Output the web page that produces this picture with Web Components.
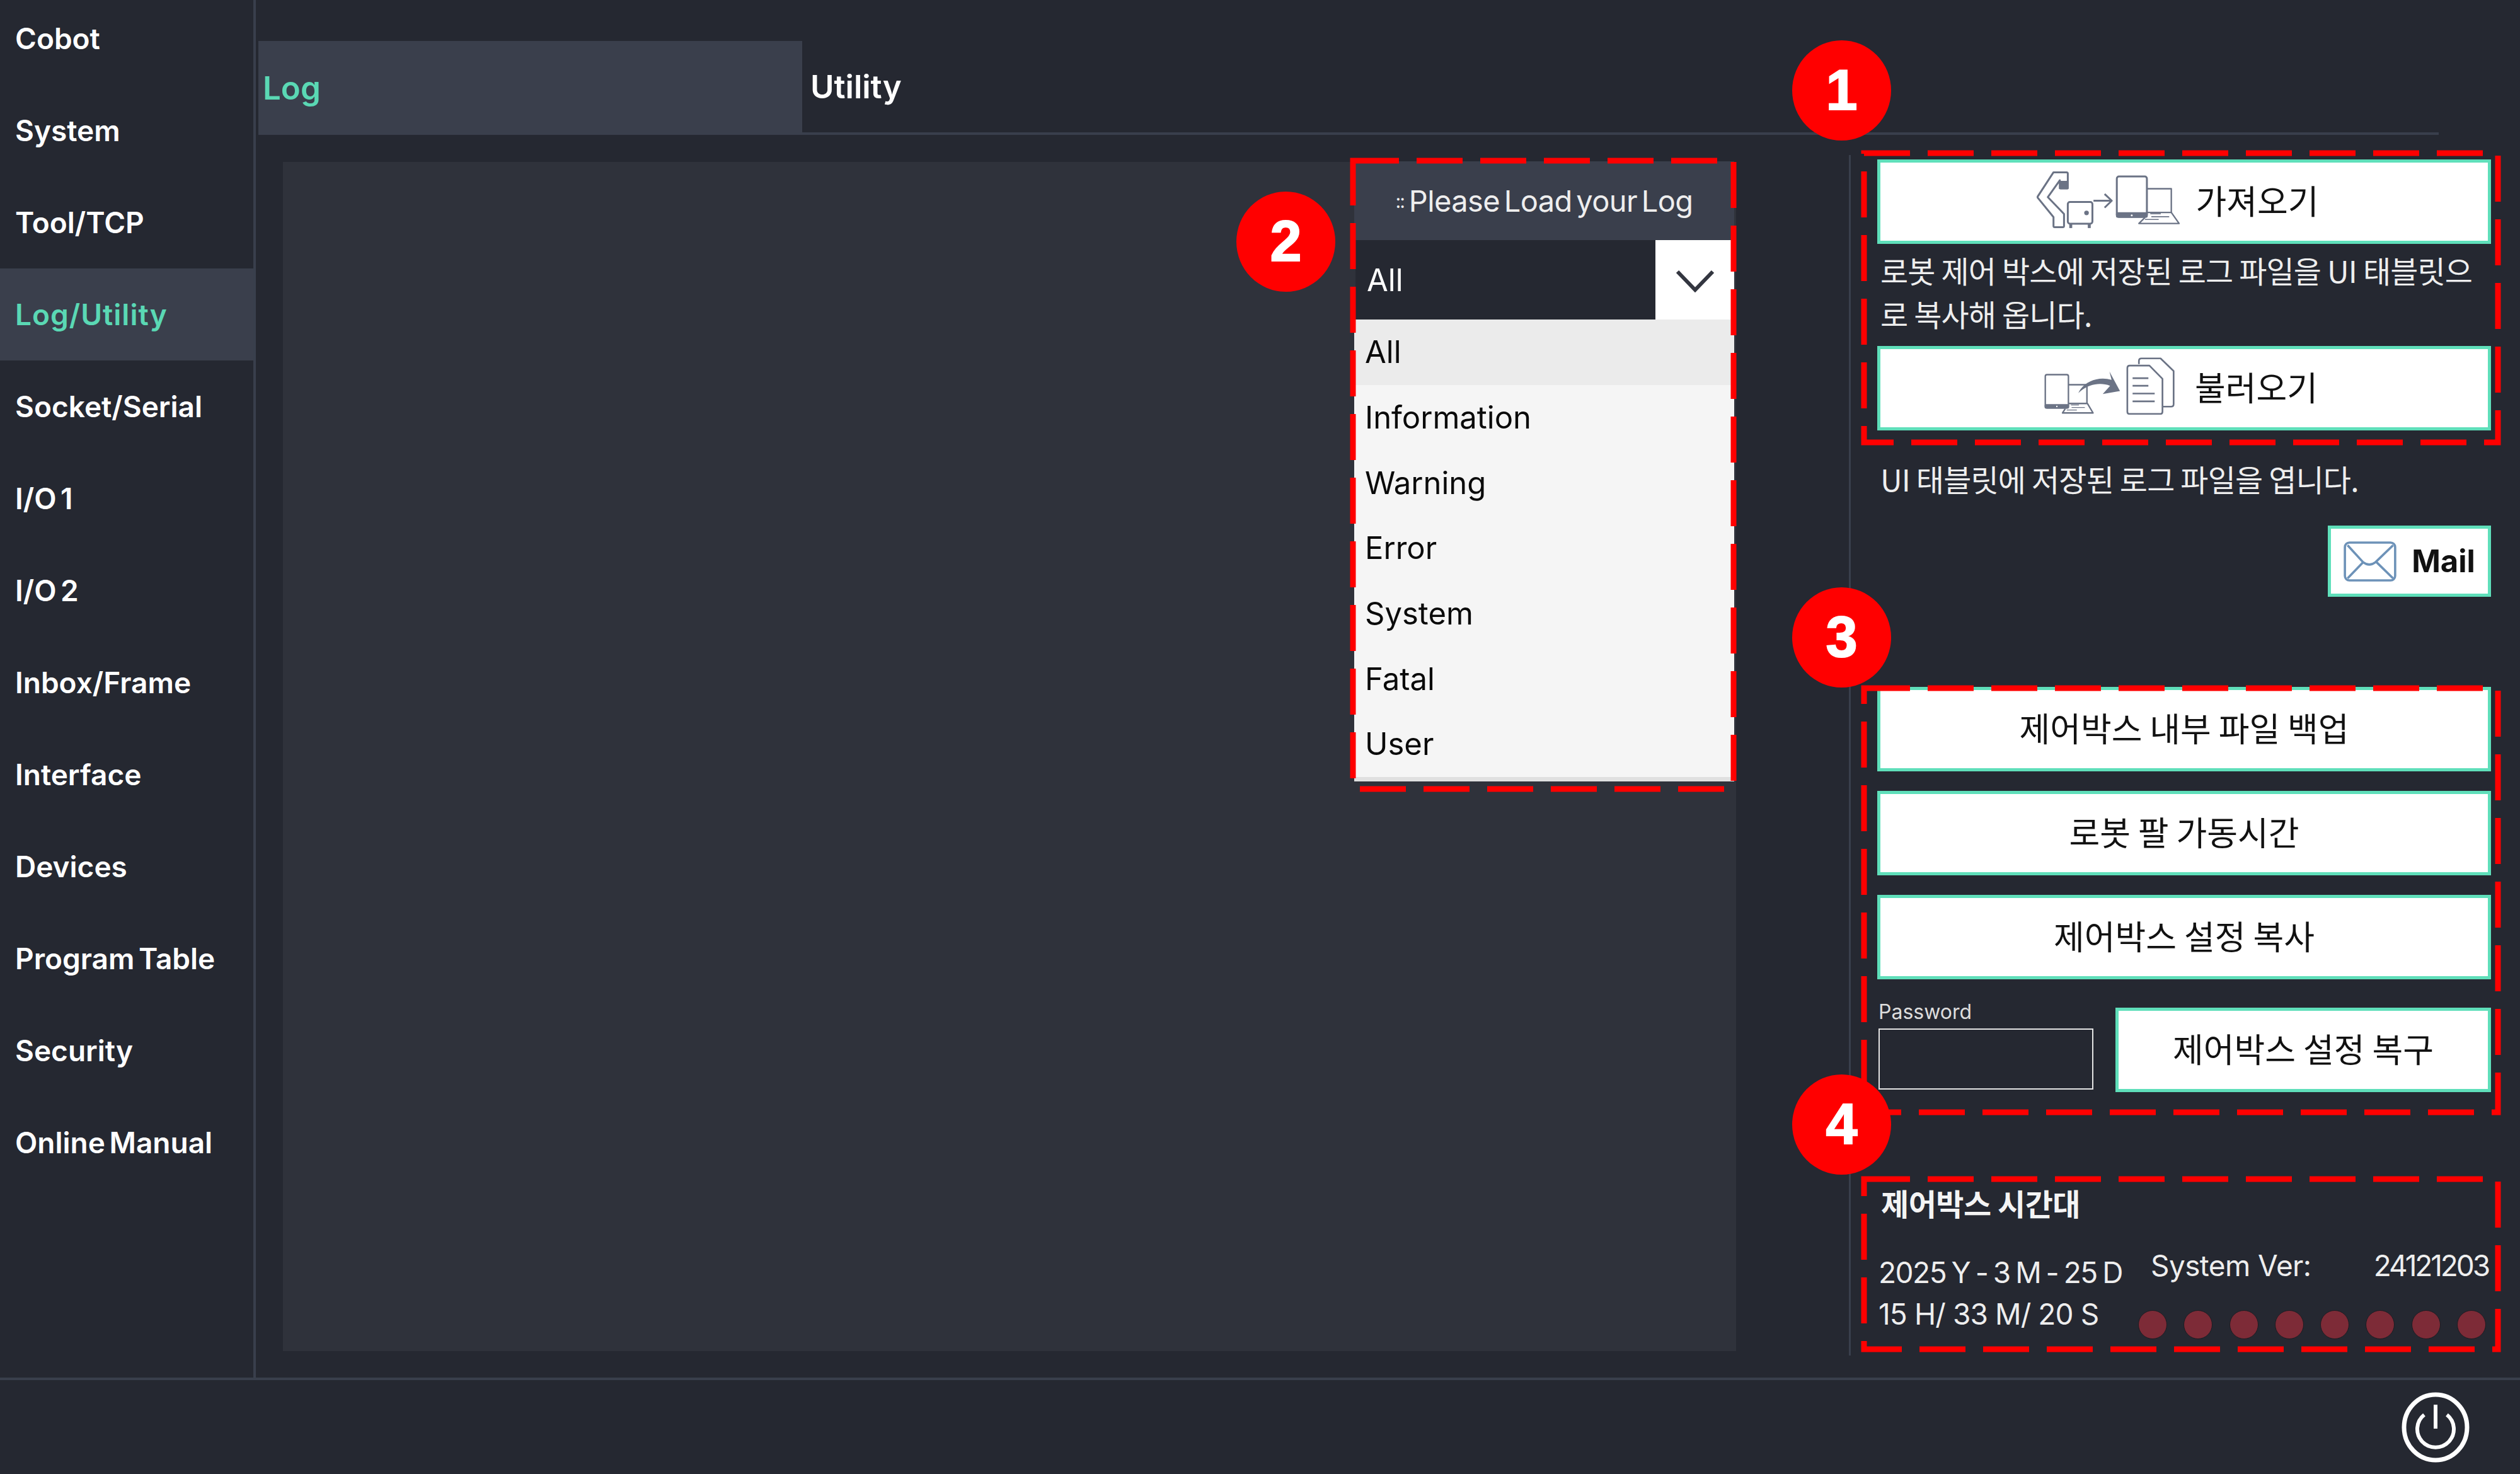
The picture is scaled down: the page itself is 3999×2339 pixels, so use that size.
<!DOCTYPE html>
<html>
<head>
<meta charset="utf-8">
<style>
    html, body { margin: 0; padding: 0; background: #252831; }
</style>
</head>
<body>
<robot-app>
    <side-nav slot="side">
        <nav-item>Cobot</nav-item>
        <nav-item>System</nav-item>
        <nav-item>Tool/TCP</nav-item>
        <nav-item active>Log/Utility</nav-item>
        <nav-item>Socket/Serial</nav-item>
        <nav-item>I/O 1</nav-item>
        <nav-item>I/O 2</nav-item>
        <nav-item>Inbox/Frame</nav-item>
        <nav-item>Interface</nav-item>
        <nav-item>Devices</nav-item>
        <nav-item>Program Table</nav-item>
        <nav-item>Security</nav-item>
        <nav-item>Online Manual</nav-item>
    </side-nav>
    <tab-bar slot="tabs"></tab-bar>
    <log-view slot="log"><log-select></log-select></log-view>
    <util-panel slot="util"></util-panel>
    <power-button slot="foot"></power-button>

    <mark-box slot="marks" x="2957.5" y="242.5" w="1006" h="459"></mark-box>
    <mark-box slot="marks" x="2146.5" y="254.5" w="604" h="997"></mark-box>
    <mark-box slot="marks" x="2957.5" y="1091.5" w="1006" h="673"></mark-box>
    <mark-box slot="marks" x="2957.5" y="1870.5" w="1006" h="270"></mark-box>
    <mark-badge slot="marks" x="2844" y="64">1</mark-badge>
    <mark-badge slot="marks" x="1962" y="304">2</mark-badge>
    <mark-badge slot="marks" x="2844" y="932">3</mark-badge>
    <mark-badge slot="marks" x="2844" y="1705">4</mark-badge>
</robot-app>

<script>
const UI_FONT = `Inter, "Noto Sans", sans-serif`;
const KR_FONT = `"Noto Sans CJK KR", "Noto Sans", sans-serif`;

class RobotApp extends HTMLElement {
    constructor() {
        super();
        this.attachShadow({ mode: "open" });
        this.shadowRoot.innerHTML = `
            <style>
                :host {
                    display: block;
                    position: relative;
                    width: 3999px;
                    height: 2339px;
                    overflow: hidden;
                    background: #252831;
                    color: #fff;
                    font-family: ${UI_FONT};
                }
                .top {
                    display: flex;
                    height: 2186px;
                }
                .main {
                    flex: 1;
                    display: flex;
                    flex-direction: column;
                    min-width: 0;
                }
                .content {
                    flex: 1;
                    display: flex;
                    min-height: 0;
                }
                .foot {
                    height: 149px;
                    border-top: 4px solid #393f4c;
                    display: flex;
                    justify-content: flex-end;
                    align-items: center;
                    padding-right: 80px;
                }
            </style>
            <div class="top">
                <slot name="side"></slot>
                <div class="main">
                    <slot name="tabs"></slot>
                    <div class="content">
                        <slot name="log"></slot>
                        <slot name="util"></slot>
                    </div>
                </div>
            </div>
            <div class="foot"><slot name="foot"></slot></div>
            <slot name="marks"></slot>
        `;
    }
}

class SideNav extends HTMLElement {
    constructor() {
        super();
        this.attachShadow({ mode: "open" });
        this.shadowRoot.innerHTML = `
            <style>
                :host {
                    display: block;
                    flex: none;
                    width: 402px;
                    border-right: 4px solid #393f4c;
                }
                .list {
                    margin-top: -12px;
                    display: flex;
                    flex-direction: column;
                }
            </style>
            <div class="list"><slot></slot></div>
        `;
    }
}

class NavItem extends HTMLElement {
    constructor() {
        super();
        this.attachShadow({ mode: "open" });
        this.shadowRoot.innerHTML = `
            <style>
                :host {
                    display: flex;
                    align-items: center;
                    height: 146px;
                    padding-left: 24px;
                    font-size: 46px;
                    font-weight: 600;
                    word-spacing: -5px;
                    color: #fff;
                }
                :host([active]) {
                    background: #3a3f4c;
                    color: #5ad8b4;
                    letter-spacing: 1px;
                }
            </style>
            <slot></slot>
        `;
    }
}

class TabBar extends HTMLElement {
    constructor() {
        super();
        this.attachShadow({ mode: "open" });
        this.shadowRoot.innerHTML = `
            <style>
                :host {
                    display: flex;
                    flex: none;
                    padding: 65px 0 0 4px;
                    margin-right: 129px;
                    font-size: 51px;
                    font-weight: 600;
                }
                .tab {
                    height: 149px;
                    display: flex;
                    align-items: center;
                    box-sizing: border-box;
                }
                .log {
                    width: 863px;
                    padding-left: 7px;
                    background: #3a3f4c;
                    color: #5ad8b4;
                }
                .utility {
                    flex: 1;
                    padding-left: 13px;
                    border-bottom: 4px solid #393f4c;
                }
            </style>
            <div class="tab log">Log</div>
            <div class="tab utility">Utility</div>
        `;
    }
}

class LogView extends HTMLElement {
    constructor() {
        super();
        this.attachShadow({ mode: "open" });
        this.shadowRoot.innerHTML = `
            <style>
                :host {
                    display: flex;
                    justify-content: flex-end;
                    align-items: flex-start;
                    flex: none;
                    box-sizing: border-box;
                    width: 2306px;
                    height: 1887px;
                    margin: 43px 0 0 43px;
                    padding-right: 3px;
                    background: #2f323b;
                }
            </style>
            <slot></slot>
        `;
    }
}

class LogSelect extends HTMLElement {
    constructor() {
        super();
        this.attachShadow({ mode: "open" });
        const items = ["All", "Information", "Warning", "Error", "System", "Fatal", "User"];
        this.shadowRoot.innerHTML = `
            <style>
                :host {
                    display: block;
                    width: 603px;
                    margin-top: -1px;
                    font-size: 49px;
                }
                .title {
                    height: 125px;
                    display: flex;
                    align-items: center;
                    justify-content: center;
                    gap: 8px;
                    box-sizing: border-box;
                    background: #3a3f4c;
                    color: #eee;
                    font-size: 47px;
                    letter-spacing: -0.6px;
                    word-spacing: -6px;
                }
                .title small { font-size: 30px; letter-spacing: -2px; }
                .field {
                    height: 126px;
                    display: flex;
                    margin-left: 2px;
                    background: #fff;
                }
                .value {
                    flex: 1;
                    display: flex;
                    align-items: center;
                    padding-left: 18px;
                    background: #252831;
                    color: #fff;
                }
                .arrow {
                    width: 125px;
                    display: flex;
                    align-items: center;
                    justify-content: center;
                    padding-top: 4px;
                    box-sizing: border-box;
                }
                ul {
                    list-style: none;
                    margin: 0;
                    padding: 0 0 7px;
                    background: #f5f5f5;
                    box-shadow: inset 0 -7px 0 #e0e0e0;
                    color: #0a0a0a;
                }
                li {
                    height: 103.7px;
                    display: flex;
                    align-items: center;
                    padding-left: 17px;
                }
                li.sel {
                    background: #ebebeb;
                }
            </style>
            <div class="title"><small>::</small><span>Please Load your Log</span></div>
            <div class="field">
                <div class="value">All</div>
                <div class="arrow">
                    <svg width="62" height="36" viewBox="0 0 62 36">
                        <path d="M3 3 L31 32 L59 3" fill="none" stroke="#333640" stroke-width="6"/>
                    </svg>
                </div>
            </div>
            <ul>${items.map((x, i) => `<li class="${i == 0 ? "sel" : ""}">${x}</li>`).join("")}</ul>
        `;
    }
}

class ToolButton extends HTMLElement {
    constructor() {
        super();
        this.attachShadow({ mode: "open" });
        this.shadowRoot.innerHTML = `
            <style>
                :host {
                    display: flex;
                    align-items: center;
                    justify-content: center;
                    box-sizing: border-box;
                    height: 134px;
                    padding-bottom: 7px;
                    background: #fff;
                    border: 5px solid #5fdfba;
                    color: #111;
                    font-family: ${KR_FONT};
                    font-size: 53px;
                }
                :host([compact]) {
                    font-family: ${UI_FONT};
                    font-size: 49px;
                    font-weight: 700;
                    padding-bottom: 0;
                }
            </style>
            <slot></slot>
        `;
    }
}

class UtilPanel extends HTMLElement {
    constructor() {
        super();
        this.attachShadow({ mode: "open" });
        this.shadowRoot.innerHTML = `
            <style>
                :host {
                    display: block;
                    position: relative;
                    box-sizing: border-box;
                    flex: none;
                    width: 1021px;
                    height: 1905px;
                    margin: 32px 0 0 179px;
                    padding: 7px 0 0 42px;
                    border-left: 3px solid #393f4c;
                    font-family: ${KR_FONT};
                    font-size: 48px;
                    color: #eee;
                }
                .wrap { width: 974px; }
                p {
                    margin: 7px 0 17px 5px;
                    line-height: 69px;
                    letter-spacing: -0.85px;
                }
                p.note { margin: 42px 0 40px 5px; }
                .import-btn { padding-right: 20px; gap: 25px; }
                .load-btn { padding-right: 10px; gap: 32px; }
                .mail {
                    width: 259px;
                    height: 113px;
                    margin-left: auto;
                    gap: 24px;
                }
                .stack {
                    display: flex;
                    flex-direction: column;
                    gap: 31px;
                    margin-top: 143px;
                }
                .pw-row {
                    display: flex;
                    justify-content: space-between;
                    margin-top: 45px;
                }
                .pw-row tool-button { width: 596px; }
                .pw label {
                    display: block;
                    height: 33px;
                    line-height: 14px;
                    padding-left: 2px;
                    font-family: ${UI_FONT};
                    font-size: 32px;
                    color: #ddd;
                }
                .pw .box {
                    box-sizing: border-box;
                    width: 341px;
                    height: 97px;
                    margin-left: 2px;
                    border: 2px solid #e4e4e4;
                }
                .zone-title {
                    margin: 145px 0 0 6px;
                    height: 60px;
                    line-height: 60px;
                    font-size: 48px;
                    font-weight: 700;
                    letter-spacing: -0.5px;
                    color: #f4f4f4;
                }
                .zone {
                    display: flex;
                    margin-top: 43px;
                    font-family: ${UI_FONT};
                    font-size: 46px;
                    letter-spacing: -1.5px;
                }
                .clock {
                    width: 414px;
                    flex: none;
                    padding-top: 5px;
                    line-height: 66px;
                    white-space: nowrap;
                    margin-left: 2px;
                    margin-right: -2px;
                }
                .clock .date { word-spacing: -3px; }
                .clock .time { letter-spacing: -0.9px; }
                .sys { flex: 1; min-width: 0; }
                .ver {
                    display: flex;
                    justify-content: space-between;
                    height: 60px;
                    line-height: 60px;
                    margin-top: -3px;
                    padding: 0 4px 0 20px;
                }
                .ver .name {
                    white-space: nowrap;
                    letter-spacing: -0.6px;
                }
                .ver .num { letter-spacing: -3.1px; }
                status-dots { margin-top: 41px; }
            </style>
            <div class="wrap">
                <tool-button class="import-btn">
                    <svg width="227" height="92" viewBox="255 100 680 275">
                        <g fill="none" stroke="#6b7385" stroke-width="9" stroke-linejoin="round">
                            <path d="M335 107 H397 Q403 107 403 113 V183 H365 V145 L308 225 L385 305 V362 Q385 368 379 368 H341 Q335 368 335 362 V320 L258 225 Z"/>
                            <rect x="403" y="248" width="117" height="103" rx="10"/>
                            <path d="M525 242 H610 M578 210 L612 242 L578 275"/>
                            <rect x="636" y="127" width="143" height="192" rx="10"/>
                            <path d="M780 185 H895 V298" stroke-width="7"/>
                            <path d="M780 298 H895 L932 350 H741 L770 322" stroke-width="7"/>
                            <path d="M795 304 H845 M800 318 H885 M770 331 H835" stroke-width="5"/>
                        </g>
                        <g fill="#6b7385">
                            <rect x="365" y="148" width="40" height="40" rx="4"/>
                            <circle cx="492" cy="300" r="11"/>
                            <rect x="410" y="350" width="14" height="22"/>
                            <rect x="498" y="350" width="14" height="22"/>
                            <rect x="632" y="297" width="151" height="26" rx="8"/>
                        </g>
                        <circle cx="707" cy="312" r="4.5" fill="#fff"/>
                    </svg>
                    <span>가져오기</span>
                </tool-button>
                <p>로봇 제어 박스에 저장된 로그 파일을 UI 태블릿으<br>로 복사해 옵니다.</p>
                <tool-button class="load-btn">
                    <svg width="207" height="91" viewBox="285 78 620 272">
                        <g fill="none" stroke="#6b7385" stroke-width="7" stroke-linejoin="round">
                            <rect x="290" y="160" width="110" height="158" rx="8"/>
                            <path d="M400 208 H488 V297"/>
                            <path d="M402 297 H490 L517 342 H372 L385 322"/>
                            <path d="M412 304 H450 M415 316 H478 M392 328 H440" stroke-width="4"/>
                            <path d="M735 110 V95 Q735 83 747 83 H838 L900 143 V300 Q900 312 888 312 H850" stroke-width="8"/>
                            <path d="M690 117 H785 L847 180 V335 Q847 347 835 347 H692 Q680 347 680 335 V129 Q680 117 692 117 Z" stroke-width="8"/>
                            <path d="M705 177 H780 M705 213 H780 M705 250 H810 M705 287 H810" stroke-width="8"/>
                        </g>
                        <g fill="#6b7385">
                            <rect x="287" y="300" width="116" height="22" rx="7"/>
                            <path d="M447 248 C470 195 540 165 605 185 L595 145 L645 238 L563 252 L598 213 C550 195 490 205 447 248 Z"/>
                        </g>
                        <circle cx="345" cy="311" r="3.5" fill="#fff"/>
                    </svg>
                    <span>불러오기</span>
                </tool-button>
                <p class="note">UI 태블릿에 저장된 로그 파일을 엽니다.</p>
                <tool-button class="mail" compact>
                    <svg width="84" height="64" viewBox="116 111 255 195">
                        <g fill="none" stroke="#6d92b8" stroke-width="11" stroke-linejoin="round">
                            <rect x="122" y="117" width="243" height="183" rx="22"/>
                            <path d="M135 130 L210 212 Q240 235 270 212 L355 130 M135 290 L207 215 M275 212 L355 290"/>
                        </g>
                    </svg>
                    <span>Mail</span>
                </tool-button>
                <div class="stack">
                    <tool-button>제어박스 내부 파일 백업</tool-button>
                    <tool-button>로봇 팔 가동시간</tool-button>
                    <tool-button>제어박스 설정 복사</tool-button>
                </div>
                <div class="pw-row">
                    <div class="pw">
                        <label>Password</label>
                        <div class="box"></div>
                    </div>
                    <tool-button>제어박스 설정 복구</tool-button>
                </div>
                <div class="zone-title">제어박스 시간대</div>
                <div class="zone">
                    <div class="clock">
                        <div class="date">2025 Y - 3 M - 25 D</div>
                        <div class="time">15 H/ 33 M/ 20 S</div>
                    </div>
                    <div class="sys">
                        <div class="ver">
                            <span class="name">System Ver:</span>
                            <span class="num">24121203</span>
                        </div>
                        <status-dots></status-dots>
                    </div>
                </div>
            </div>
        `;
    }
}

class StatusDots extends HTMLElement {
    constructor() {
        super();
        this.attachShadow({ mode: "open" });
        this.shadowRoot.innerHTML = `
            <style>
                :host {
                    display: flex;
                    justify-content: space-between;
                    padding-right: 8px;
                }
                span {
                    width: 44px;
                    height: 44px;
                    border-radius: 50%;
                    background: #7d2b37;
                    border: 1px solid #1b1c22;
                }
            </style>
            ${"<span></span>".repeat(8)}
        `;
    }
}

class PowerButton extends HTMLElement {
    constructor() {
        super();
        this.attachShadow({ mode: "open" });
        this.shadowRoot.innerHTML = `
            <style>
                :host { display: block; width: 108px; height: 112px; }
            </style>
            <svg width="108" height="112" viewBox="0 0 108 112">
                <ellipse cx="54" cy="56" rx="50" ry="52" fill="none" stroke="#fff" stroke-width="7"/>
                <path d="M36 36 A29 29 0 1 0 72 36" fill="none" stroke="#fff" stroke-width="6"/>
                <path d="M54 20 V58" fill="none" stroke="#fff" stroke-width="6"/>
            </svg>
        `;
    }
}

class MarkBox extends HTMLElement {
    constructor() {
        super();
        this.attachShadow({ mode: "open" });
        const x = +this.getAttribute("x"), y = +this.getAttribute("y");
        const w = +this.getAttribute("w"), h = +this.getAttribute("h");
        this.shadowRoot.innerHTML = `
            <style>
                :host {
                    display: block;
                    position: absolute;
                    left: ${x - 5}px;
                    top: ${y - 5}px;
                    pointer-events: none;
                }
                svg { display: block; }
            </style>
            <svg width="${w + 10}" height="${h + 10}">
                <rect x="5" y="5" width="${w}" height="${h}" fill="none" stroke="#ff0000" stroke-width="9" stroke-dasharray="73 28"/>
            </svg>
        `;
    }
}

class MarkBadge extends HTMLElement {
    constructor() {
        super();
        this.attachShadow({ mode: "open" });
        this.shadowRoot.innerHTML = `
            <style>
                :host {
                    display: flex;
                    position: absolute;
                    left: ${this.getAttribute("x")}px;
                    top: ${this.getAttribute("y")}px;
                    width: 157px;
                    height: 159px;
                    align-items: center;
                    justify-content: center;
                    border-radius: 50%;
                    background: #ff0000;
                    color: #fff;
                    font-family: "Liberation Sans", sans-serif;
                    font-size: 90px;
                    font-weight: 700;
                    -webkit-text-stroke: 2px #fff;
                }
            </style>
            <slot></slot>
        `;
    }
}

customElements.define("robot-app", RobotApp);
customElements.define("side-nav", SideNav);
customElements.define("nav-item", NavItem);
customElements.define("tab-bar", TabBar);
customElements.define("log-view", LogView);
customElements.define("log-select", LogSelect);
customElements.define("tool-button", ToolButton);
customElements.define("util-panel", UtilPanel);
customElements.define("status-dots", StatusDots);
customElements.define("power-button", PowerButton);
customElements.define("mark-box", MarkBox);
customElements.define("mark-badge", MarkBadge);
</script>
</body>
</html>
